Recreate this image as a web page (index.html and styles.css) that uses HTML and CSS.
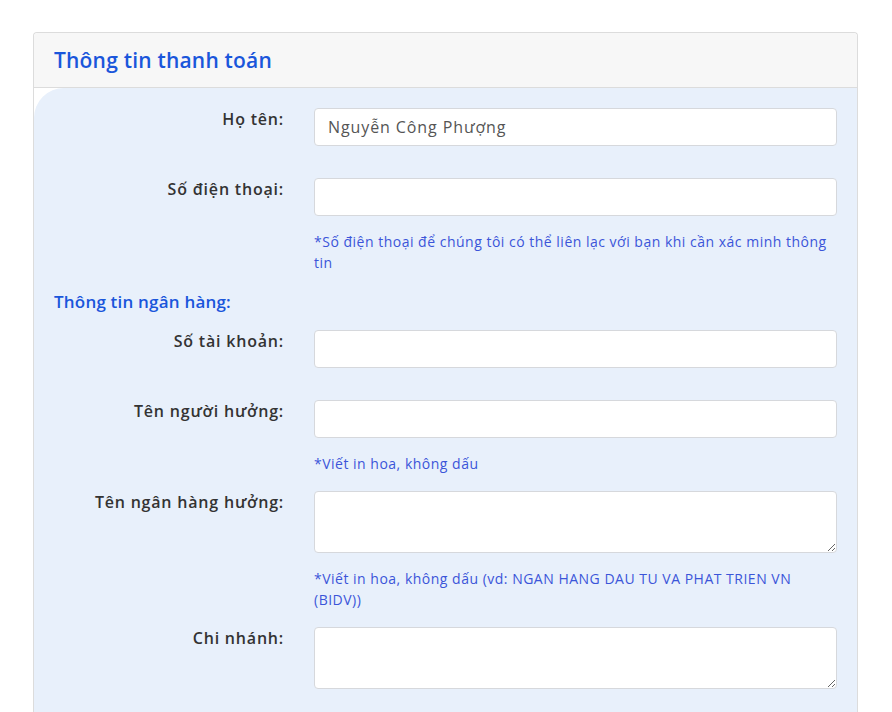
FILE: index.html
```html
<!DOCTYPE html>
<html lang="vi">
<head>
<meta charset="utf-8">
<link rel="stylesheet" href="styles.css">
</head>
<body>
<div class="card">
  <div class="card-header">Thông tin thanh toán</div>
  <div class="card-body">
    <div class="row">
      <label class="lbl">Họ tên:</label>
      <div class="field"><input class="ctl" type="text" value="Nguyễn Công Phượng"></div>
    </div>
    <div class="row">
      <label class="lbl">Số điện thoại:</label>
      <div class="field"><input class="ctl" type="text">
        <div class="help">*Số điện thoại để chúng tôi có thể liên lạc với bạn khi cần xác minh thông tin</div>
      </div>
    </div>
    <div class="section">Thông tin ngân hàng:</div>
    <div class="row">
      <label class="lbl">Số tài khoản:</label>
      <div class="field"><input class="ctl" type="text"></div>
    </div>
    <div class="row">
      <label class="lbl">Tên người hưởng:</label>
      <div class="field"><input class="ctl" type="text">
        <div class="help">*Viết in hoa, không dấu</div>
      </div>
    </div>
    <div class="row">
      <label class="lbl">Tên ngân hàng hưởng:</label>
      <div class="field"><textarea class="ctl area"></textarea>
        <div class="help">*Viết in hoa, không dấu (vd: NGAN HANG DAU TU VA PHAT TRIEN VN (BIDV))</div>
      </div>
    </div>
    <div class="row">
      <label class="lbl">Chi nhánh:</label>
      <div class="field"><textarea class="ctl area"></textarea></div>
    </div>
  </div>
</div>
</body>
</html>
```

FILE: styles.css
```css
html, body {
  margin: 0;
  padding: 0;
  background: #ffffff;
}
body {
  font-family: "Open Sans", "Liberation Sans", sans-serif;
  padding: 32px 34px 0 33px;
  height: 712px;
  box-sizing: border-box;
  overflow: hidden;
}
.card {
  border: 1px solid #dcdcdc;
  border-bottom: none;
  border-radius: 4px 4px 0 0;
  background: #ffffff;
  height: 679px;
  overflow: hidden;
}
.card-header {
  background: #f7f7f7;
  border-bottom: 1px solid #dcdcdc;
  border-radius: 4px 4px 0 0;
  height: 55px;
  box-sizing: border-box;
  padding: 0 20px;
  display: flex;
  align-items: center;
  color: #1a56db;
  font-size: 21px;
  font-weight: 600;
  letter-spacing: 0.2px;
}
.card-body {
  background: #e8f0fb;
  border-top-left-radius: 30px;
  padding: 20px 20px 0 20px;
  height: 640px;
}
.row {
  display: grid;
  grid-template-columns: 260px 1fr;
  margin-bottom: 16px;
}
.lbl {
  text-align: right;
  padding-right: 30px;
  font-size: 16px;
  font-weight: 600;
  color: #333333;
  line-height: 22px;
  letter-spacing: 0.8px;
}
.ctl {
  display: block;
  box-sizing: border-box;
  width: 100%;
  height: 38px;
  border: 1px solid #d6d8dc;
  border-radius: 4px;
  background: #ffffff;
  padding: 0 13px;
  font-family: inherit;
  font-size: 16px;
  letter-spacing: 0.9px;
  color: #555555;
  margin: 0 0 16px 0;
  outline: none;
}
.area {
  height: 62px;
  resize: vertical;
}
.help {
  font-size: 14px;
  line-height: 21px;
  color: #3b55d9;
  margin: -1px 0 1px 0;
  letter-spacing: 0.5px;
}
.section {
  color: #1a56db;
  font-size: 17px;
  font-weight: 600;
  line-height: 24px;
  margin: 0 0 16px 0;
  letter-spacing: 0.2px;
}
```
